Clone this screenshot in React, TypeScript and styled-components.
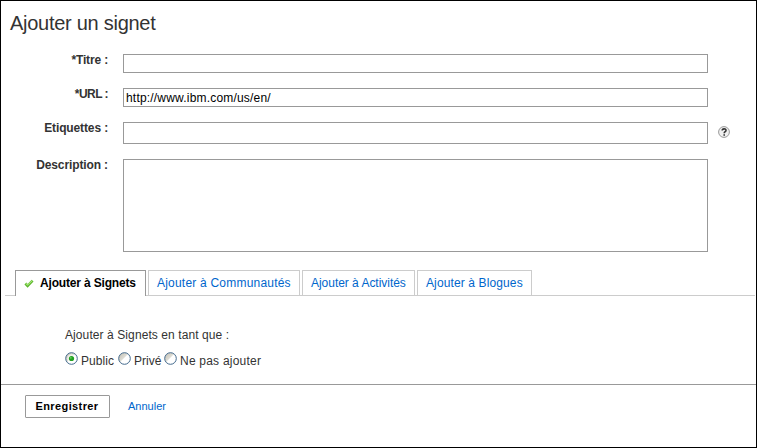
import React from "react";
import styled, { createGlobalStyle } from "styled-components";

const Global = createGlobalStyle`
  *, *::before, *::after { box-sizing: border-box; }
  body {
    margin: 0;
    background: #fff;
    font: 12px/14px "Liberation Sans", Arial, sans-serif;
    color: #333;
  }
`;

const Dialog = styled.main`
  width: 757px;
  height: 448px;
  border: 1px solid #000;
  background: #fff;
  display: flex;
  flex-direction: column;
  white-space: nowrap;
  overflow: hidden;
`;

const Title = styled.h1`
  margin: 9px 0 0 9px;
  height: 44px;
  font-size: 20px;
  line-height: 26px;
  font-weight: 400;
  letter-spacing: -0.27px;
`;

const Form = styled.div`
  display: flex;
  flex-direction: column;
  gap: 15px;
`;

const Row = styled.div`
  display: grid;
  grid-template-columns: 107px 585px 14px;
  column-gap: 15px;
  align-items: start;
`;

const Label = styled.label<{ $track?: number }>`
  font-weight: 700;
  text-align: right;
  margin-top: -1px;
  letter-spacing: ${(p) => p.$track ?? 0}px;
`;

const Input = styled.input<{ $h: number }>`
  display: block;
  width: 100%;
  height: ${(p) => p.$h}px;
  border: 1px solid #999;
  border-radius: 0;
  background: #fff;
  padding: 1px 2px 0;
  margin: 0;
  outline: 0;
  font: 12px/14px "Liberation Sans", Arial, sans-serif;
  letter-spacing: 0.19px;
  color: #000;
`;

const Area = styled.textarea`
  display: block;
  width: 100%;
  height: 93px;
  border: 1px solid #999;
  border-radius: 0;
  padding: 2px;
  margin: 0;
  resize: none;
  outline: 0;
`;

const Help = styled.svg`
  width: 12px;
  height: 12px;
  margin: 4px 0 0 -5px;
  display: block;
`;

const Tabs = styled.div`
  display: flex;
  gap: 2px;
  height: 26px;
  margin: 18px 1px 0 4px;
  padding-left: 10px;
  background: linear-gradient(#ccc, #ccc) left bottom / 100% 1px no-repeat;
`;

const Tab = styled.a<{ $w: number; $active?: boolean; $track?: number }>`
  display: flex;
  align-items: center;
  width: ${(p) => p.$w}px;
  height: 26px;
  padding: 0 0 1px 8px;
  border: 1px solid ${(p) => (p.$active ? "#999" : "#ccc")};
  ${(p) => p.$active && "border-bottom-width: 0; padding-bottom: 2px;"}
  background: #fff;
  color: ${(p) => (p.$active ? "#000" : "#06c")};
  font-weight: ${(p) => (p.$active ? 700 : 400)};
  letter-spacing: ${(p) => p.$track ?? 0}px;
`;

const Check = styled.svg`
  width: 10px;
  height: 9px;
  margin: 1px 6px 0 0;
  flex: none;
`;

const Panel = styled.section`
  height: 88px;
  padding: 32px 0 0 64px;
`;

const Prompt = styled.div`
  letter-spacing: 0.09px;
`;

const Options = styled.div`
  display: flex;
  margin-top: 10px;
`;

const Option = styled.label<{ $w: number; $track: number }>`
  display: flex;
  width: ${(p) => p.$w}px;
  letter-spacing: ${(p) => p.$track}px;

  svg {
    width: 13px;
    height: 13px;
    margin-right: 3px;
    flex: none;
  }
  span {
    margin-top: 2px;
  }
`;

const Footer = styled.footer`
  flex: 1;
  display: flex;
  align-items: flex-start;
  gap: 18px;
  padding: 10px 0 0 24px;
  border-top: 1px solid #999;
`;

const Save = styled.button`
  width: 85px;
  height: 23px;
  border: 1px solid #999;
  border-radius: 1px;
  background: #fff;
  color: #000;
  padding: 0 1px 1px 0;
  font: 700 11px/13px "Liberation Sans", Arial, sans-serif;
  letter-spacing: 0.4px;
`;

const Cancel = styled.a`
  color: #06c;
  font-size: 11px;
  line-height: 13px;
  margin-top: 5px;
`;

function Radio({ on = false }: { on?: boolean }) {
  return (
    <svg viewBox="0 0 13 13">
      <defs>
        <linearGradient id="bowl" x1="0" y1="0" x2="1" y2="1">
          <stop offset="0.15" stopColor="#cbc8bd" />
          <stop offset="0.42" stopColor="#dddcd4" />
          <stop offset="0.5" stopColor="#fff" />
        </linearGradient>
      </defs>
      <circle cx="6.5" cy="6.5" r="5.8" fill="url(#bowl)" stroke="#42698c" strokeWidth="1" />
      {on && <circle cx="6.5" cy="6.5" r="4.2" fill="#fff" opacity="0.6" />}
      {on && <circle cx="6.5" cy="6.5" r="2.6" fill="#21a121" />}
      {on && <circle cx="5.8" cy="5.8" r="0.9" fill="#6bd65f" />}
    </svg>
  );
}

export default function App() {
  return (
    <>
      <Global />
      <Dialog>
        <Title>Ajouter un signet</Title>
        <Form>
          <Row>
            <Label htmlFor="title" $track={-0.15}>*Titre :</Label>
            <Input id="title" $h={19} />
          </Row>
          <Row>
            <Label htmlFor="url" $track={-0.55}>*URL :</Label>
            <Input id="url" $h={19} defaultValue="http://www.ibm.com/us/en/" />
          </Row>
          <Row>
            <Label htmlFor="tags" $track={-0.13}>Etiquettes :</Label>
            <Input id="tags" $h={22} />
            <Help viewBox="0 0 12 12">
              <circle cx="6" cy="6" r="5.4" fill="#f0f0f0" stroke="#999" />
              <path d="M4.2 4.5C4.2 2.3 8 2.3 8 4.4C8 5.7 6.2 5.7 6.2 7.3M6.2 8.3v1.5" fill="none" stroke="#333" strokeWidth="1.6" />
            </Help>
          </Row>
          <Row>
            <Label htmlFor="desc" $track={-0.12}>Description :</Label>
            <Area id="desc" />
          </Row>
        </Form>
        <Tabs>
          <Tab $w={131} $active $track={-0.17}>
            <Check viewBox="0 0 10 9">
              <path d="M1.4 4.5L3.6 6.9L8.6 1.7" fill="none" stroke="#5cb52c" strokeWidth="2.6" />
              <path d="M1.6 4.4L3.6 6.1L8.2 1.7" fill="none" stroke="#a6e87a" strokeWidth="1.1" />
            </Check>
            Ajouter à Signets
          </Tab>
          <Tab $w={152} $track={0.21}>Ajouter à Communautés</Tab>
          <Tab $w={113} $track={-0.03}>Ajouter à Activités</Tab>
          <Tab $w={115} $track={0.12}>Ajouter à Blogues</Tab>
        </Tabs>
        <Panel>
          <Prompt>Ajouter à Signets en tant que :</Prompt>
          <Options>
            <Option $w={53} $track={0.05}><Radio on /><span>Public</span></Option>
            <Option $w={46} $track={0}><Radio /><span>Privé</span></Option>
            <Option $w={110} $track={0.22}><Radio /><span>Ne pas ajouter</span></Option>
          </Options>
        </Panel>
        <Footer>
          <Save>Enregistrer</Save>
          <Cancel>Annuler</Cancel>
        </Footer>
      </Dialog>
    </>
  );
}
